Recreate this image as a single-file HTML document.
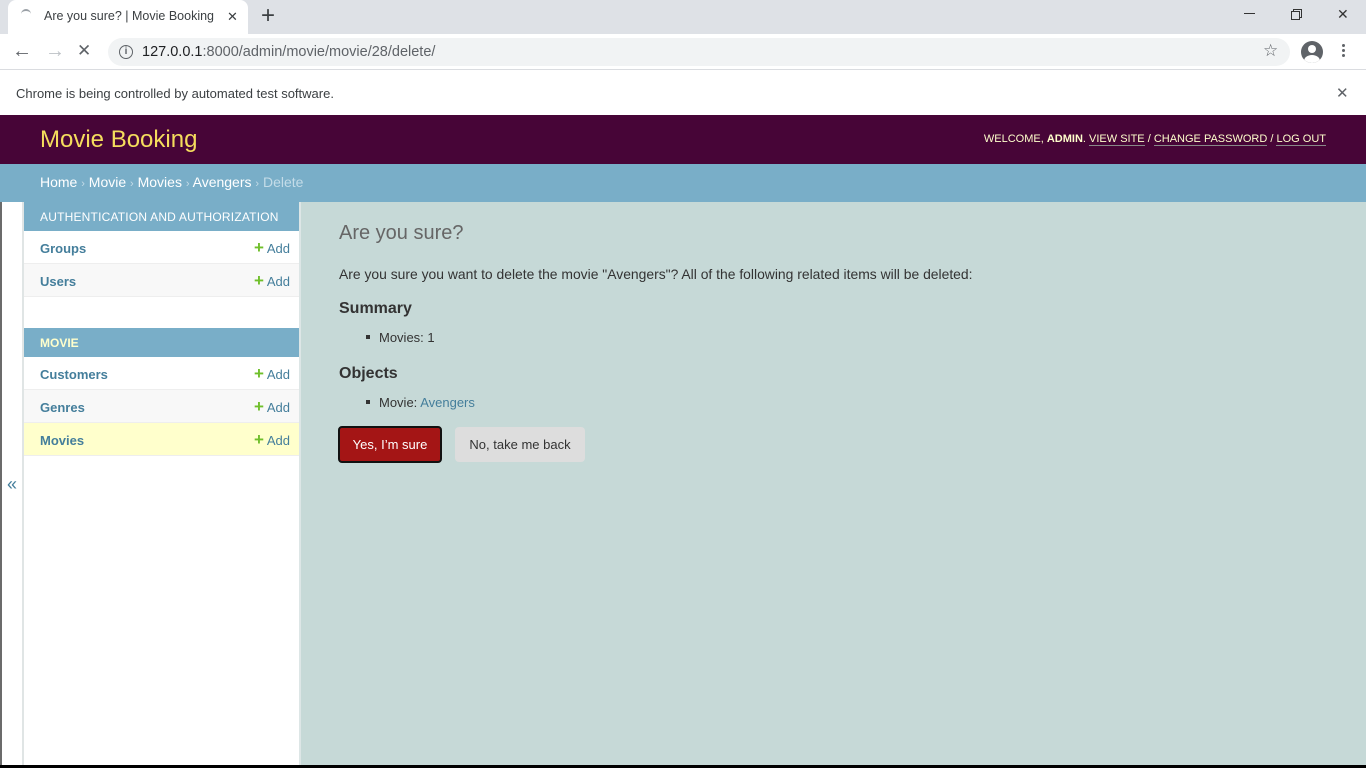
<!DOCTYPE html>
<html><head><meta charset="utf-8"><style>
*{box-sizing:border-box;margin:0;padding:0}
body{width:1366px;height:768px;overflow:hidden;font-family:"Liberation Sans",Arial,sans-serif;background:#fff;position:relative}
.abs{position:absolute;white-space:nowrap}
.add{position:absolute;right:1076px;font-size:13px;color:#447e9b;line-height:16px;white-space:nowrap}
</style></head><body>
<!-- chrome tab bar -->
<div class="abs" style="left:0;top:0;width:1366px;height:34px;background:#dee1e6"></div>
<div class="abs" style="left:8px;top:0;width:240px;height:34px;background:#fff;border-radius:8px 8px 0 0"></div>
<div class="abs" style="left:21px;top:9px;width:10px;height:10px;border-top:2px solid #9aa0a6;border-radius:50%"></div>
<div class="abs" style="left:44px;top:9px;font-size:12.5px;color:#3c4043">Are you sure? | Movie Booking</div>
<div class="abs" style="left:227px;top:9px;font-size:13px;color:#3c4043">✕</div>
<div class="abs" style="left:261px;top:2px;font-size:24px;color:#3c4043;font-weight:300">+</div>
<div class="abs" style="left:1244px;top:13px;width:11px;height:1px;background:#333"></div>
<div class="abs" style="left:1293px;top:9px;width:9px;height:9px;border:1px solid #333"></div>
<div class="abs" style="left:1291px;top:11px;width:9px;height:9px;border:1px solid #333;background:#dee1e6"></div>
<div class="abs" style="left:1337px;top:6px;font-size:14px;color:#333">✕</div>
<!-- toolbar -->
<div class="abs" style="left:0;top:34px;width:1366px;height:36px;background:#fff;border-bottom:1px solid #dadce0"></div>
<div class="abs" style="left:12px;top:40px;font-size:20px;color:#5f6368">←</div>
<div class="abs" style="left:45px;top:40px;font-size:20px;color:#bdc1c6">→</div>
<div class="abs" style="left:77px;top:41px;font-size:17px;color:#5f6368">✕</div>
<div class="abs" style="left:108px;top:38px;width:1182px;height:28px;background:#f1f3f4;border-radius:14px"></div>
<div class="abs" style="left:119px;top:45px;width:14px;height:14px;border:1.5px solid #5f6368;border-radius:50%;font-size:10px;text-align:center;line-height:11px;color:#5f6368;font-weight:bold">i</div>
<div class="abs" style="left:142px;top:44px;font-size:14.5px;color:#202124">127.0.0.1<span style="color:#5f6368">:8000/admin/movie/movie/28/delete/</span></div>
<div class="abs" style="left:1263px;top:41px;font-size:17px;color:#5f6368">☆</div>
<div class="abs" style="left:1301px;top:41px;width:22px;height:22px;border-radius:50%;background:#5f6368;overflow:hidden"><div class="abs" style="left:7px;top:4px;width:8px;height:8px;border-radius:50%;background:#fff"></div><div class="abs" style="left:3px;top:14px;width:16px;height:12px;border-radius:50%;background:#fff"></div></div>
<div class="abs" style="left:1342px;top:44px;width:3px;height:3px;background:#5f6368;border-radius:50%;box-shadow:0 5px 0 #5f6368,0 10px 0 #5f6368"></div>
<!-- info bar -->
<div class="abs" style="left:16px;top:86px;font-size:13px;color:#3c4043">Chrome is being controlled by automated test software.</div>
<div class="abs" style="left:1336px;top:84px;font-size:15px;color:#5f6368">✕</div>
<!-- header -->
<div class="abs" style="left:0;top:115px;width:1366px;height:49px;background:#470537"></div>
<div class="abs" style="left:40px;top:126px;font-size:24px;color:#f5dd5d">Movie Booking</div>
<div class="abs" style="right:40px;top:133px;font-size:11px;color:#ffc">WELCOME, <b>ADMIN</b>. <span style="border-bottom:1px solid #888">VIEW SITE</span> / <span style="border-bottom:1px solid #888">CHANGE PASSWORD</span> / <span style="border-bottom:1px solid #888">LOG OUT</span></div>
<!-- breadcrumbs -->
<div class="abs" style="left:0;top:164px;width:1366px;height:38px;background:#79aec8"></div>
<div class="abs" style="left:40px;top:174px;font-size:14px;color:#fff">Home <span style="color:#c4dce8;font-size:11px">›</span> Movie <span style="color:#c4dce8;font-size:11px">›</span> Movies <span style="color:#c4dce8;font-size:11px">›</span> Avengers <span style="color:#c4dce8;font-size:11px">›</span> <span style="color:#c4dce8">Delete</span></div>
<!-- toggle column -->
<div class="abs" style="left:0;top:202px;width:2px;height:566px;background:#6b6b6b"></div>
<div class="abs" style="left:22px;top:202px;width:2px;height:566px;background:#e0e5e5"></div>
<div class="abs" style="left:7px;top:474px;font-size:18px;color:#447e9b">«</div>
<!-- sidebar -->
<div class="abs" style="left:299px;top:202px;width:2px;height:566px;background:#dde6e6"></div>
<div class="abs" style="left:24px;top:202px;width:275px;height:29px;background:#79aec8;color:#fff;font-size:12px;padding:8px 16px;letter-spacing:0.2px">AUTHENTICATION AND AUTHORIZATION</div>
<div class="abs" style="left:24px;top:231px;width:275px;height:33px;border-bottom:1px solid #eee;background:#fff"></div>
<div class="abs" style="left:24px;top:264px;width:275px;height:33px;border-bottom:1px solid #eee;background:#f8f8f8"></div>
<div class="abs" style="left:24px;top:328px;width:275px;height:29px;background:#79aec8;color:#ffc;font-size:12px;font-weight:bold;padding:8px 16px">MOVIE</div>
<div class="abs" style="left:24px;top:357px;width:275px;height:33px;border-bottom:1px solid #eee;background:#fff"></div>
<div class="abs" style="left:24px;top:390px;width:275px;height:33px;border-bottom:1px solid #eee;background:#f8f8f8"></div>
<div class="abs" style="left:24px;top:423px;width:275px;height:33px;border-bottom:1px solid #eee;background:#ffc"></div>
<div class="abs" style="left:40px;top:241px;font-size:13px;font-weight:bold;color:#447e9b">Groups</div>
<div class="abs" style="left:40px;top:274px;font-size:13px;font-weight:bold;color:#447e9b">Users</div>
<div class="abs" style="left:40px;top:367px;font-size:13px;font-weight:bold;color:#447e9b">Customers</div>
<div class="abs" style="left:40px;top:400px;font-size:13px;font-weight:bold;color:#447e9b">Genres</div>
<div class="abs" style="left:40px;top:433px;font-size:13px;font-weight:bold;color:#447e9b">Movies</div>
<div class="add" style="top:240px"><b style="color:#70bf2b;font-size:17px">+</b> Add</div>
<div class="add" style="top:273px"><b style="color:#70bf2b;font-size:17px">+</b> Add</div>
<div class="add" style="top:366px"><b style="color:#70bf2b;font-size:17px">+</b> Add</div>
<div class="add" style="top:399px"><b style="color:#70bf2b;font-size:17px">+</b> Add</div>
<div class="add" style="top:432px"><b style="color:#70bf2b;font-size:17px">+</b> Add</div>
<!-- main -->
<div class="abs" style="left:301px;top:202px;width:1065px;height:566px;background:#c6d9d7"></div>
<div class="abs" style="left:339px;top:222px;font-size:20px;color:#666">Are you sure?</div>
<div class="abs" style="left:339px;top:266px;font-size:13.9px;color:#333">Are you sure you want to delete the movie "Avengers"? All of the following related items will be deleted:</div>
<div class="abs" style="left:339px;top:300px;font-size:16px;font-weight:bold;color:#333">Summary</div>
<div class="abs" style="left:366px;top:335px;width:4px;height:4px;background:#333"></div>
<div class="abs" style="left:379px;top:330px;font-size:13px;color:#333">Movies: 1</div>
<div class="abs" style="left:339px;top:365px;font-size:16px;font-weight:bold;color:#333">Objects</div>
<div class="abs" style="left:366px;top:400px;width:4px;height:4px;background:#333"></div>
<div class="abs" style="left:379px;top:395px;font-size:13px;color:#333">Movie: <span style="color:#447e9b">Avengers</span></div>
<div class="abs" style="left:338px;top:426px;width:104px;height:37px;background:#a41515;border:2px solid #111;border-radius:4px;color:#fff;font-size:13px;text-align:center;line-height:33px">Yes, I’m sure</div>
<div class="abs" style="left:455px;top:427px;width:130px;height:35px;background:#ddd;border-radius:4px;color:#333;font-size:13px;text-align:center;line-height:35px">No, take me back</div>
<div class="abs" style="left:0;top:765px;width:1366px;height:3px;background:#000"></div>
</body></html>
